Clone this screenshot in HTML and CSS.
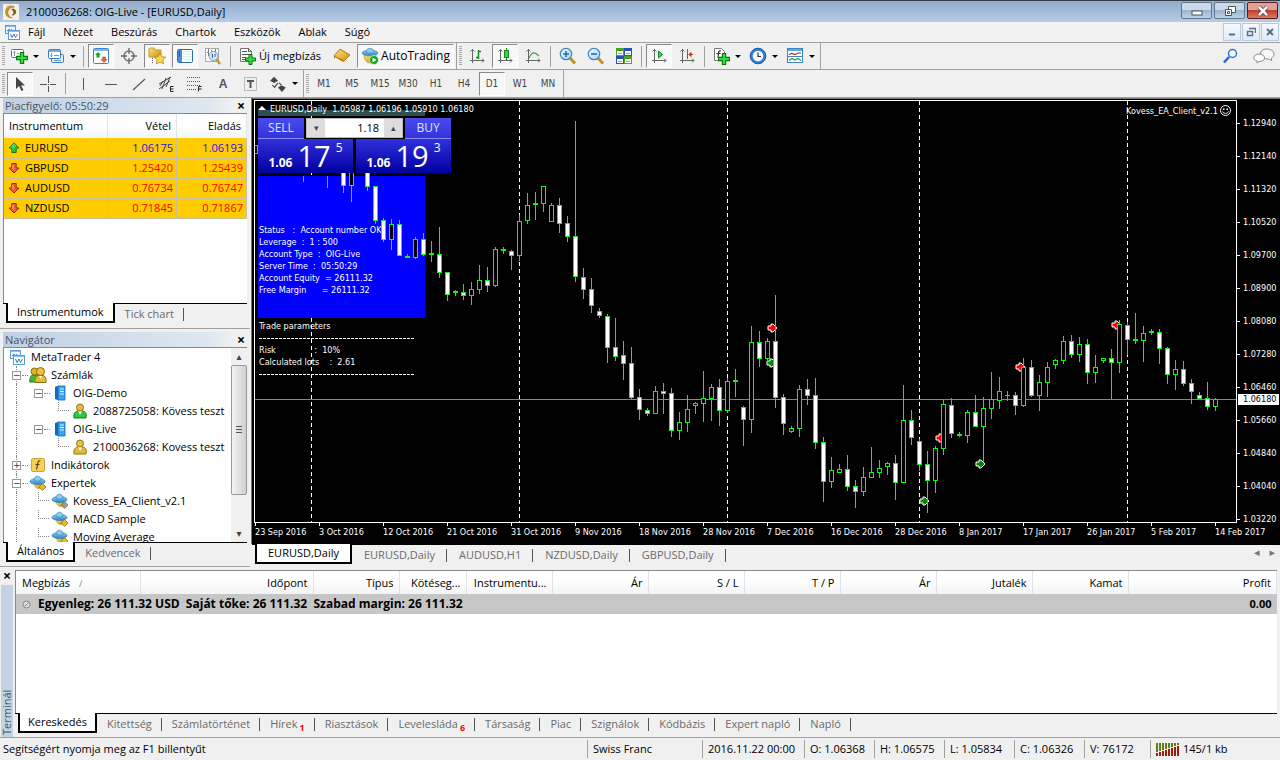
FILE: index.html
```html
<!DOCTYPE html>
<html lang="hu">
<head>
<meta charset="utf-8">
<title>2100036268: OIG-Live - [EURUSD,Daily]</title>
<link rel="stylesheet" href="styles.css">
</head>
<body>
<svg class="defs" aria-hidden="true">
  <defs>
    <linearGradient id="g-hat" x1="0" y1="0" x2="0" y2="1"><stop offset="0" stop-color="#8fd0f5"/><stop offset="1" stop-color="#2b83c0"/></linearGradient>
    <linearGradient id="g-gold" x1="0" y1="0" x2="1" y2="1"><stop offset="0" stop-color="#ffe47a"/><stop offset="1" stop-color="#c98f10"/></linearGradient>
    <linearGradient id="g-green" x1="0" y1="0" x2="1" y2="1"><stop offset="0" stop-color="#8af58a"/><stop offset="1" stop-color="#0aa012"/></linearGradient>
    <linearGradient id="g-lens" x1="0" y1="0" x2="1" y2="1"><stop offset="0" stop-color="#f4fbff"/><stop offset="1" stop-color="#a9d4f5"/></linearGradient>
    <symbol id="plus" viewBox="0 0 11 11"><path d="M4 .5h3V4h3.500v3H7v3.500H4V7H.5V4H4z" fill="#2fe03a" stroke="#067a0b"/></symbol>
    <symbol id="i-app" viewBox="0 0 16 16"><rect width="16" height="16" fill="#f6f1e6"/><path d="M11 2C5 0 1 5 2.500 10c1 3 4 5 8 4-4-1-6-4-5-7 1-3 3-4 6-3z" fill="#c98a33"/><path d="M8 5c3-1 6 1 5 4-1 2-3 3-5 2 2 0 3-2 2-4z" fill="#8a5a1e"/><path d="M3 3c3-2 7-2 9 0" stroke="#e6c48c" fill="none"/></symbol>
    <symbol id="i-charts" viewBox="0 0 15 15"><rect x=".5" y=".5" width="10" height="8" fill="#eaf4ff" stroke="#5a9ad6"/><path d="M1 1.500h9" stroke="#8fc0ee"/><path d="M2 6l2-2 1 2 2-2" stroke="#4a8ad0" fill="none"/><rect x="3.500" y="5.500" width="11" height="9" fill="#fff" stroke="#5a9ad6"/><path d="M4 6.500h10" stroke="#8fc0ee"/><path d="M5.500 9l1.500 3.500 2-3.500 1.500 3.500 2-3.500" stroke="#3a78c4" fill="none"/></symbol>
    <symbol id="i-newchart" viewBox="0 0 18 18"><rect x="1.500" y="2.500" width="12" height="8" rx="1" fill="#fff" stroke="#3c7fb8"/><path d="M4.500 4v5M3.500 5.500h2M7 6.500h2M11 7.500h1" stroke="#6c98bd"/><use href="#plus" x="6" y="5" width="12" height="12"/></symbol>
    <symbol id="i-profile" viewBox="0 0 18 18"><rect x="4.500" y="7.500" width="12" height="8" rx="1" fill="#dcebf8" stroke="#3c7fb8"/><rect x="1.500" y="2.500" width="12" height="9" rx="1" fill="#fff" stroke="#3c7fb8"/><path d="M2 4h11" stroke="#74aede" stroke-width="2"/><path d="M4.500 6v4M3.500 8.500h2M7 8.500h5M7 13.500h7" stroke="#6c98bd"/></symbol>
    <symbol id="i-watch" viewBox="0 0 18 18"><rect x="1.500" y="1.500" width="15" height="15" rx="1" fill="#fff" stroke="#3c84c8"/><path d="M2 3h14" stroke="#7db6e8" stroke-width="2"/><path d="M6 5l3 3H7.500v2.500h-3V8H3z" fill="#1f9e2d"/><path d="M12 15.500l-3-3h1.500V10h3v2.500H15z" fill="#f0602e" stroke="#c23a0c" stroke-width=".5"/></symbol>
    <symbol id="i-target" viewBox="0 0 16 16"><circle cx="8" cy="8" r="5" fill="none" stroke="#777" stroke-width="1.500"/><path d="M8 0v6M8 10v6M0 8h6M10 8h6" stroke="#666" stroke-width="1.300"/></symbol>
    <symbol id="i-star" viewBox="0 0 18 18"><path d="M1 10V2l1-1h4l1 2h6v7z" fill="url(#g-gold)" stroke="#c79d22"/><path d="M4.500 11v6" stroke="#555" stroke-dasharray="1 1"/><path d="M12 6l1.800 3.700 4 .5-3 2.700.8 4L12 15l-3.600 2 .8-4-3-2.800 4-.5z" fill="#ffd94d" stroke="#b88711" stroke-width=".8"/></symbol>
    <symbol id="i-nav" viewBox="0 0 18 16"><rect x="1.500" y="1.500" width="15" height="13" rx="1" fill="#fff" stroke="#2a6cae"/><rect x="2" y="2" width="4" height="12" fill="#4b93d6"/><path d="M7 3.500h9M7 6h9M7 8.500h9M7 11h9" stroke="#dce8f4"/><path d="M3 4h1M3 6h1M3 8h1" stroke="#123"/></symbol>
    <symbol id="i-tester" viewBox="0 0 18 18"><rect x="1.500" y="1.500" width="13" height="13" fill="#fff" stroke="#aaa"/><path d="M4.500 2v7M7.500 3v7M11.500 2v6M3 5.500h2M10 4.500h2" stroke="#777"/><path d="M12 12l4 5" stroke="#c9952a" stroke-width="2.500"/><circle cx="9.500" cy="9" r="4.500" fill="#cfe8fb" fill-opacity=".85" stroke="#6aa3cf"/><path d="M8.500 7v4M11 7v3" stroke="#557"/></symbol>
    <symbol id="i-order" viewBox="0 0 18 18"><path d="M1.500 1.500h8l3 3v10h-11z" fill="#fff" stroke="#777"/><path d="M9.500 1.500v3h3M3 4.500h5M3 7.500h8M3 10.500h4M3 12.500h3" stroke="#555" fill="none"/><use href="#plus" x="6" y="7" width="11" height="11"/></symbol>
    <symbol id="i-book" viewBox="0 0 18 18"><path d="M1 9l6-7 10 6-6 8L1 11z" fill="#b97c12"/><path d="M2 10l8 5 6-7v2l-6 7-8-5z" fill="#fff3cf"/><path d="M1 9l6-7 10 6-6 6z" fill="url(#g-gold)" stroke="#a5700d" stroke-width=".8"/></symbol>
    <symbol id="i-auto" viewBox="0 0 18 18"><path d="M3 7c0 6 3 9 6 9s6-4 6-9z" fill="url(#g-gold)" stroke="#b98a1a" stroke-width=".7"/><ellipse cx="9" cy="6" rx="8" ry="2.800" fill="url(#g-hat)" stroke="#3b86b5" stroke-width=".7"/><path d="M5 5c0-5 8-5 8 0-2 1.500-6 1.500-8 0z" fill="#8ccbef" stroke="#3b86b5" stroke-width=".7"/><circle cx="13" cy="13" r="4.500" fill="#15a51d" stroke="#fff" stroke-width=".6"/><path d="M11.500 10.500l4 2.500-4 2.500z" fill="#fff"/></symbol>
    <symbol id="axes" viewBox="0 0 16 16"><path d="M3.500 1v14M1 12.500h14M1.500 3.500l2-2 2 2M13 10.500l2 2-2 2" stroke="#666" fill="none"/></symbol>
    <symbol id="i-bars" viewBox="0 0 16 16"><use href="#axes"/><path d="M9.500 2v9M9.500 3.500H12M7 9.500h2.500" stroke="#128a1c" stroke-width="1.500"/></symbol>
    <symbol id="i-candle" viewBox="0 0 16 16"><use href="#axes"/><path d="M9.500 0v12" stroke="#128a1c"/><rect x="7.500" y="2.500" width="4" height="7" fill="#3bd54a" stroke="#128a1c"/></symbol>
    <symbol id="i-line" viewBox="0 0 16 16"><use href="#axes"/><path d="M4 10c3-6 5-7 10-2" stroke="#3aa04a" fill="none" stroke-width="1.200"/></symbol>
    <symbol id="i-zin" viewBox="0 0 18 18"><path d="M11 11l5 5.500" stroke="#c48f1c" stroke-width="3"/><circle cx="7" cy="7" r="5.700" fill="url(#g-lens)" stroke="#3d86c6" stroke-width="1.200"/><path d="M4 7h6M7 4v6" stroke="#2470b0" stroke-width="1.600"/></symbol>
    <symbol id="i-zout" viewBox="0 0 18 18"><path d="M11 11l5 5.500" stroke="#c48f1c" stroke-width="3"/><circle cx="7" cy="7" r="5.700" fill="url(#g-lens)" stroke="#3d86c6" stroke-width="1.200"/><path d="M4 7h6" stroke="#2470b0" stroke-width="1.600"/></symbol>
    <symbol id="i-tile" viewBox="0 0 16 16"><rect width="8" height="8" fill="#46a51c"/><rect x="8" width="8" height="8" fill="#2a4fc4"/><rect y="8" width="8" height="8" fill="#2a4fc4"/><rect x="8" y="8" width="8" height="8" fill="#46a51c"/><path d="M1 3h6v4H1zM9 3h6v4H9zM1 11h6v4H1zM9 11h6v4H9z" fill="#fff"/><path d="M2 5.500h4M10 5.500h4M2 13.500h4M10 13.500h4" stroke="#99a"/></symbol>
    <symbol id="i-scroll" viewBox="0 0 16 16"><use href="#axes"/><path d="M7.500 3v7l4-3.500z" fill="#3bd54a" stroke="#128a1c"/></symbol>
    <symbol id="i-shift" viewBox="0 0 16 16"><use href="#axes"/><path d="M8.500 1v10" stroke="#2c6ca8"/><path d="M14 6.500h-4M12 4.500l-2 2 2 2z" stroke="#c23a0c" fill="#c23a0c"/></symbol>
    <symbol id="i-ind" viewBox="0 0 18 18"><path d="M2.500 1.500h7l3 3v9h-10z" fill="#fff" stroke="#777"/><path d="M9 4C6.500 3 6.500 5 6 11M4.500 6.500h4" stroke="#333" fill="none" stroke-width="1.200"/><use href="#plus" x="6" y="6" width="12" height="12"/></symbol>
    <symbol id="i-clock" viewBox="0 0 18 18"><circle cx="9" cy="9" r="7.800" fill="#2f7fd6" stroke="#1c56a5"/><circle cx="9" cy="9" r="5.300" fill="#f6faff"/><path d="M9 5.500V9.500h3" stroke="#333" fill="none" stroke-width="1.200"/></symbol>
    <symbol id="i-tpl" viewBox="0 0 18 18"><rect x="1.500" y="1.500" width="15" height="14" fill="#fff" stroke="#3c84c8"/><path d="M2 3h14" stroke="#5fa3e0" stroke-width="2"/><path d="M2 9.500h14" stroke="#3c84c8"/><path d="M3 7.500l3-1 3 1 3-1.500h3" stroke="#a8321c" fill="none" stroke-width="1.200"/><path d="M3 13.500l3-2 3 1.500 3-1.500 3 2" stroke="#2e9a3a" fill="none" stroke-width="1.200"/></symbol>
    <symbol id="i-cursor" viewBox="0 0 12 16"><path d="M2 1v12l3-3 2.500 5 2-1L7 9.500h4z" fill="#444"/></symbol>
    <symbol id="i-cross" viewBox="0 0 16 16"><path d="M8.500 0v7M8.500 10v6M0 8.500h7M10 8.500h6" stroke="#555"/><path d="M8 8h1v1H8z" fill="#555"/></symbol>
    <symbol id="i-v" viewBox="0 0 16 16"><path d="M8.500 2v12" stroke="#555"/></symbol>
    <symbol id="i-h" viewBox="0 0 16 16"><path d="M2 8.500h12" stroke="#555"/></symbol>
    <symbol id="i-t" viewBox="0 0 16 16"><path d="M2 14L14 3" stroke="#555" stroke-width="1.200"/></symbol>
    <symbol id="i-chan" viewBox="0 0 18 18"><path d="M1 9L13 2M1 14l11-8M4 14L8 3M8 12l4-10M2 11l3-5" stroke="#444" fill="none"/><path d="M15.500 11.500h-3v5h3M12.500 14h3" stroke="#222" fill="none"/></symbol>
    <symbol id="i-fibo" viewBox="0 0 18 18"><path d="M1 2.500h14M1 6.500h14M1 10.500h14M1 14.500h9" stroke="#555" stroke-dasharray="1 1"/><path d="M15.500 11.500h-3v5M12.500 14h3" stroke="#222" fill="none"/></symbol>
    <symbol id="i-lbl" viewBox="0 0 16 16"><rect x="1.500" y="1.500" width="12" height="13" fill="none" stroke="#888" stroke-dasharray="1 1"/><path d="M4 5h7M7.500 5v7" stroke="#555" stroke-width="2"/></symbol>
    <symbol id="i-arrows" viewBox="0 0 16 16"><path d="M1 5l3.500-3.500L8 5 4.500 7zM8 11l3-2 4 2-3.500 4z" fill="#444"/><path d="M3 9l2 2 3-4M9 7l2 2" stroke="#444" fill="none"/></symbol>
    <symbol id="i-search" viewBox="0 0 16 16"><path d="M6 9l-5 5.500" stroke="#2a62d0" stroke-width="2.500"/><circle cx="9.500" cy="5.500" r="4" fill="#f2f7ff" stroke="#2f74dd" stroke-width="1.500"/></symbol>
    <symbol id="i-chat" viewBox="0 0 22 16"><path d="M13 1c5 0 8 2 8 5 0 2-1 3-2.500 4v2.500L15.500 11c-5 0-8-2-8-5s2-5 5.500-5z" fill="#f8f8f8" stroke="#8c8c8c"/><path d="M6 6c3 0 5.500 1.500 5.500 4S9 13.500 6 13.500L4 15v-2C2 12.500.8 11.500.8 10 .8 7.500 3 6 6 6z" fill="#fff" stroke="#8c8c8c"/></symbol>
    <symbol id="a-up" viewBox="0 0 12 12"><path d="M6 .8L11 6H8.200v4.500H3.800V6H1z" fill="url(#g-green)" stroke="#157a1a"/></symbol>
    <symbol id="a-down" viewBox="0 0 12 12"><path d="M6 11L1 6h2.800V1.500h4.400V6H11z" fill="#f0602e" stroke="#a82410"/><path d="M5 3v4" stroke="#ffc0a0"/></symbol>
    <symbol id="i-accts" viewBox="0 0 18 16"><path d="M.8 15c0-5 1-7 4-7h5v7z" fill="#35c23c" stroke="#157a1a"/><circle cx="5.500" cy="4.500" r="3.500" fill="#e0b22c" stroke="#8f6c0e"/><path d="M6 15.500c-.5-5 1.500-7 4-7h3c3 0 4.500 2 4 7z" fill="#e3bb3a" stroke="#8f6c0e"/><circle cx="11.500" cy="4.500" r="4" fill="#ecc23c" stroke="#8f6c0e"/><path d="M10 9l1.500 3L13 9z" fill="#fff"/></symbol>
    <symbol id="i-demo" viewBox="0 0 14 16"><path d="M1 15c-1-5 2-7 4-7h4c3 0 5 2 4 7z" fill="#2fc83a" stroke="#118219"/><path d="M5 8l2 4 2-4z" fill="#fff"/><circle cx="7" cy="4.500" r="3.500" fill="#e8b93a" stroke="#94700f"/></symbol>
    <symbol id="i-live" viewBox="0 0 14 16"><path d="M1 15c-1-5 2-7 4-7h4c3 0 5 2 4 7z" fill="#e3bb3a" stroke="#94700f"/><path d="M5 8l2 4 2-4z" fill="#fff"/><circle cx="7" cy="4.500" r="3.500" fill="#e8c04a" stroke="#94700f"/></symbol>
    <symbol id="i-server" viewBox="0 0 14 16"><path d="M2 2l4-1.500V15.500L2 14z" fill="#1668b8"/><path d="M5 1h7v14H5z" fill="#39a4ee" stroke="#1668b8" stroke-width=".8"/><path d="M7 4h4M7 6.500h4M7 9h4" stroke="#e6f6ff"/></symbol>
    <symbol id="i-fx" viewBox="0 0 16 16"><rect x="1.500" y="1.500" width="13" height="13" rx="1.500" fill="#f6d25c" stroke="#c9a43c"/><path d="M10.500 4C7.500 3 8 6 6.500 12.500M5.500 7.500h4" stroke="#5b430a" fill="none" stroke-width="1.200"/></symbol>
    <symbol id="i-ea" viewBox="0 0 18 16"><path d="M4 7c1 5 3 7 6 7 3-1 4-4 4-7z" fill="url(#g-gold)"/><ellipse cx="8.500" cy="6.500" rx="7.500" ry="3" fill="url(#g-hat)" stroke="#2d79ab" stroke-width=".7"/><path d="M5 5c0-5 7-5 7 0-2 1.500-5 1.500-7 0z" fill="#8dcdf2" stroke="#3583b4" stroke-width=".7"/><path d="M13.500 8.500l3.500 3.500-3.500 3.500L10 12z" fill="currentColor" stroke="#7e661d" stroke-width=".7"/></symbol>
  </defs>
</svg>

<header class="titlebar">
  <svg class="app-icon"><use href="#i-app"/></svg>
  <h1 class="title">2100036268: OIG-Live - [EURUSD,Daily]</h1>
  <div class="win-buttons">
    <button class="win" aria-label="Kis méret"><svg width="12" height="12"><rect x="1" y="6" width="10" height="4" fill="#fff" stroke="#455"/></svg></button>
    <button class="win" aria-label="Visszaállítás"><svg width="12" height="12"><path d="M4.500 1.500h7v6h-7z" fill="#fff" stroke="#455"/><path d="M1.500 4.500h6v6h-6zM3.500 6.500h2v2h-2z" fill="#fff" stroke="#455"/></svg></button>
    <button class="win win-close" aria-label="Bezárás"><svg width="12" height="12"><path d="M2 2l8 8M10 2l-8 8" stroke="#533" stroke-width="4"/><path d="M2 2l8 8M10 2l-8 8" stroke="#fff" stroke-width="2.500"/></svg></button>
  </div>
</header>

<nav class="menubar">
  <svg class="menu-icon"><use href="#i-charts"/></svg>
  <button class="menu">Fájl</button><button class="menu">Nézet</button><button class="menu">Beszúrás</button><button class="menu">Chartok</button><button class="menu">Eszközök</button><button class="menu">Ablak</button><button class="menu">Súgó</button>
  <div class="mdi-buttons">
    <button class="mdi" aria-label="Kis méret"><svg width="10" height="10"><path d="M2 7.500h6" stroke="#5b7086" stroke-width="2"/></svg></button>
    <button class="mdi" aria-label="Visszaállítás"><svg width="10" height="10"><path d="M3 1.500h6.500V6M1.500 4.500h5v4h-5z" fill="none" stroke="#5b7086" stroke-width="1.500"/></svg></button>
    <button class="mdi" aria-label="Bezárás"><svg width="10" height="10"><path d="M2 2l6 6M8 2L2 8" stroke="#5b7086" stroke-width="2"/></svg></button>
  </div>
</nav>

<div class="toolbar-row">
  <div class="toolbar">
    <i class="grip"></i>
    <button class="tool drop" aria-label="Új chart"><svg class="ic"><use href="#i-newchart"/></svg></button>
    <button class="tool drop" aria-label="Profilok"><svg class="ic"><use href="#i-profile"/></svg></button>
    <i class="sep"></i>
    <button class="tool on" aria-label="Piacfigyelő"><svg class="ic"><use href="#i-watch"/></svg></button>
    <button class="tool" aria-label="Adatablak"><svg class="ic small"><use href="#i-target"/></svg></button>
    <button class="tool on" aria-label="Navigátor"><svg class="ic"><use href="#i-star"/></svg></button>
    <button class="tool on" aria-label="Terminál"><svg class="ic"><use href="#i-nav"/></svg></button>
    <button class="tool" aria-label="Teszter"><svg class="ic"><use href="#i-tester"/></svg></button>
    <i class="sep"></i>
    <button class="tool text order"><svg class="ic"><use href="#i-order"/></svg>Új megbízás</button>
    <button class="tool" aria-label="MetaEditor"><svg class="ic"><use href="#i-book"/></svg></button>
    <button class="tool text on auto"><svg class="ic"><use href="#i-auto"/></svg>AutoTrading</button>
  </div>
  <div class="toolbar">
    <i class="grip"></i>
    <button class="tool" aria-label="Oszlopok"><svg class="ic small"><use href="#i-bars"/></svg></button>
    <button class="tool on" aria-label="Gyertyák"><svg class="ic small"><use href="#i-candle"/></svg></button>
    <button class="tool" aria-label="Vonal"><svg class="ic small"><use href="#i-line"/></svg></button>
    <i class="sep"></i>
    <button class="tool" aria-label="Nagyítás"><svg class="ic"><use href="#i-zin"/></svg></button>
    <button class="tool" aria-label="Kicsinyítés"><svg class="ic"><use href="#i-zout"/></svg></button>
    <button class="tool" aria-label="Mozaik"><svg class="ic small"><use href="#i-tile"/></svg></button>
    <i class="sep"></i>
    <button class="tool on" aria-label="Görgetés"><svg class="ic small"><use href="#i-scroll"/></svg></button>
    <button class="tool" aria-label="Eltolás"><svg class="ic small"><use href="#i-shift"/></svg></button>
    <i class="sep"></i>
    <button class="tool drop" aria-label="Indikátorok"><svg class="ic"><use href="#i-ind"/></svg></button>
    <button class="tool drop" aria-label="Periódusok"><svg class="ic"><use href="#i-clock"/></svg></button>
    <button class="tool drop" aria-label="Sablonok"><svg class="ic"><use href="#i-tpl"/></svg></button>
  </div>
  <div class="toolbar-end">
    <button class="tool" aria-label="Keresés"><svg class="ic small"><use href="#i-search"/></svg></button>
    <button class="tool" aria-label="Csevegés"><svg class="ic wide"><use href="#i-chat"/></svg></button>
  </div>
</div>

<div class="toolbar-row">
  <div class="toolbar">
    <i class="grip"></i>
    <button class="tool on" aria-label="Kurzor"><svg class="ic small"><use href="#i-cursor"/></svg></button>
    <button class="tool" aria-label="Célkereszt"><svg class="ic small"><use href="#i-cross"/></svg></button>
    <i class="sep"></i>
    <button class="tool" aria-label="Függőleges vonal"><svg class="ic small"><use href="#i-v"/></svg></button>
    <button class="tool" aria-label="Vízszintes vonal"><svg class="ic small"><use href="#i-h"/></svg></button>
    <button class="tool" aria-label="Trendvonal"><svg class="ic small"><use href="#i-t"/></svg></button>
    <button class="tool" aria-label="Csatorna"><svg class="ic"><use href="#i-chan"/></svg></button>
    <button class="tool" aria-label="Fibonacci"><svg class="ic"><use href="#i-fibo"/></svg></button>
    <button class="tool letter">A</button>
    <button class="tool" aria-label="Címke"><svg class="ic small"><use href="#i-lbl"/></svg></button>
    <button class="tool drop" aria-label="Nyilak"><svg class="ic"><use href="#i-arrows"/></svg></button>
  </div>
  <div class="toolbar">
    <i class="grip"></i>
    <button class="tool tf">M1</button><button class="tool tf">M5</button><button class="tool tf">M15</button><button class="tool tf">M30</button><button class="tool tf">H1</button><button class="tool tf">H4</button><button class="tool tf on">D1</button><button class="tool tf">W1</button><button class="tool tf">MN</button>
  </div>
</div>

<main class="workspace">
  <aside class="side">
    <section class="panel">
      <header class="caption"><h2>Piacfigyelő: 05:50:29</h2><button class="x" aria-label="Bezárás">×</button></header>
      <div class="panel-body">
        <table class="quotes">
          <colgroup><col><col class="q-bid"><col class="q-ask"></colgroup>
          <thead><tr><th>Instrumentum</th><th>Vétel</th><th>Eladás</th></tr></thead>
          <tbody>
            <tr class="up"><td><svg><use href="#a-up"/></svg>EURUSD</td><td>1.06175</td><td>1.06193</td></tr>
            <tr><td><svg><use href="#a-down"/></svg>GBPUSD</td><td>1.25420</td><td>1.25439</td></tr>
            <tr><td><svg><use href="#a-down"/></svg>AUDUSD</td><td>0.76734</td><td>0.76747</td></tr>
            <tr><td><svg><use href="#a-down"/></svg>NZDUSD</td><td>0.71845</td><td>0.71867</td></tr>
          </tbody>
        </table>
      </div>
      <div class="tabs"><button class="tab active">Instrumentumok</button><button class="tab">Tick chart</button></div>
    </section>
    <section class="panel navigator">
      <header class="caption"><h2>Navigátor</h2><button class="x" aria-label="Bezárás">×</button></header>
      <div class="panel-body tree-wrap">
        <ul class="tree">
          <li><svg class="root"><use href="#i-charts"/></svg>MetaTrader 4</li>
          <li class="l1"><button class="exp" aria-label="Összecsukás">−</button><i class="dots"></i><svg><use href="#i-accts"/></svg>Számlák</li>
          <li class="l2"><button class="exp" aria-label="Összecsukás">−</button><i class="dots"></i><svg><use href="#i-server"/></svg>OIG-Demo</li>
          <li class="l3"><i class="elbow"></i><svg><use href="#i-demo"/></svg>2088725058: Kövess teszt</li>
          <li class="l2"><button class="exp" aria-label="Összecsukás">−</button><i class="dots"></i><svg><use href="#i-server"/></svg>OIG-Live</li>
          <li class="l3"><i class="elbow"></i><svg><use href="#i-live"/></svg>2100036268: Kovess teszt</li>
          <li class="l1"><button class="exp" aria-label="Kibontás">+</button><i class="dots"></i><svg><use href="#i-fx"/></svg>Indikátorok</li>
          <li class="l1"><button class="exp" aria-label="Összecsukás">−</button><i class="dots"></i><svg><use href="#i-ea"/></svg>Expertek</li>
          <li class="l2 ea"><i class="elbow"></i><svg class="idle"><use href="#i-ea"/></svg>Kovess_EA_Client_v2.1</li>
          <li class="l2 ea"><i class="elbow"></i><svg><use href="#i-ea"/></svg>MACD Sample</li>
          <li class="l2 ea"><i class="elbow"></i><svg><use href="#i-ea"/></svg>Moving Average</li>
        </ul>
        <div class="scroll"><button aria-label="Fel">▴</button><i class="thumb"></i><button aria-label="Le">▾</button></div>
      </div>
      <div class="tabs"><button class="tab active">Általános</button><button class="tab">Kedvencek</button></div>
    </section>
  </aside>

  <section class="chart-area">
    <div class="chart">
      <div class="plot">
        <svg class="candles" id="candles" role="img" aria-label="EURUSD napi gyertyák">
          <g id="scene" transform="translate(-255 -101)">
            <path class="period" d="M311.500 101V1500M519.500 101V1500M727.500 101V1500M919.500 101V1500M1127.500 101V1500"/>
            <rect x="258" y="110" width="167" height="6" fill="#2f4f4f"/>
            <rect x="258" y="176" width="167" height="142" fill="#0000ff"/>
            <path d="M262 106l4 4h-8z" fill="#fff"/>
            <text x="270" y="112">EURUSD,Daily  1.05987 1.06196 1.05910 1.06180</text>
            <text x="259" y="233">Status   :  Account number OK</text>
            <text x="259" y="245">Leverage  :  1 : 500</text>
            <text x="259" y="257">Account Type  :  OIG-Live</text>
            <text x="259" y="269">Server Time  :  05:50:29</text>
            <text x="259" y="281">Account Equity  = 26111.32</text>
            <text x="259" y="293">Free Margin      = 26111.32</text>
            <text x="259" y="329">Trade parameters</text>
            <path d="M259 338.500h156M259 374.500h156" stroke="#fff" stroke-dasharray="3 1"/>
            <text x="259" y="353">Risk               :  10%</text>
            <text x="259" y="365">Calculated lots    :  2.61</text>
            <path d="M255 399.500h2000" stroke="#778899"/>
          </g>
        </svg>
        <div class="ea-name">Kovess_EA_Client_v2.1<svg width="13" height="13"><circle cx="6.500" cy="6.500" r="5" fill="none" stroke="#fff"/><path d="M4 4.500h1.500v1.500H4zM7.500 4.500H9v1.500H7.500z" fill="#fff"/><path d="M3.500 7.500c1 2.500 5 2.500 6 0" fill="none" stroke="#fff"/></svg></div>
        <form class="trade" onsubmit="return false">
          <button class="side-btn" type="button">SELL</button>
          <div class="lots"><button type="button" aria-label="Kevesebb">▾</button><input aria-label="Mennyiség" value="1.18"><button type="button" aria-label="Több">▴</button></div>
          <button class="side-btn" type="button">BUY</button>
          <div class="quote"><b>1.06</b><strong>17</strong><sup>5</sup></div>
          <div class="quote"><b>1.06</b><strong>19</strong><sup>3</sup></div>
        </form>
      </div>
      <div class="prices">
        <span>1.12940</span><span>1.12140</span><span>1.11320</span><span>1.10520</span><span>1.09700</span><span>1.08900</span><span>1.08080</span><span>1.07280</span><span>1.06460</span><span>1.05660</span><span>1.04840</span><span>1.04040</span><span>1.03220</span>
        <b class="current">1.06180</b>
      </div>
      <div class="dates">
        <span>23 Sep 2016</span><span>3 Oct 2016</span><span>12 Oct 2016</span><span>21 Oct 2016</span><span>31 Oct 2016</span><span>9 Nov 2016</span><span>18 Nov 2016</span><span>28 Nov 2016</span><span>7 Dec 2016</span><span>16 Dec 2016</span><span>28 Dec 2016</span><span>8 Jan 2017</span><span>17 Jan 2017</span><span>26 Jan 2017</span><span>5 Feb 2017</span><span>14 Feb 2017</span>
      </div>
    </div>
    <div class="tabs chart-tabs">
      <button class="tab active">EURUSD,Daily</button><button class="tab">EURUSD,Daily</button><button class="tab">AUDUSD,H1</button><button class="tab">NZDUSD,Daily</button><button class="tab">GBPUSD,Daily</button>
      <div class="tab-scroll"><button aria-label="Előző">◂</button><button aria-label="Következő">▸</button></div>
    </div>
  </section>
</main>

<section class="terminal">
  <header class="strip"><button class="x" aria-label="Bezárás">×</button><h2>Terminál</h2></header>
  <div class="term-main">
    <div class="term-body">
      <table class="orders">
        <colgroup><col class="c-id"><col class="c-time"><col class="c-type"><col class="c-lot"><col class="c-sym"><col class="c-num"><col class="c-num"><col class="c-num"><col class="c-num"><col class="c-num"><col class="c-num"><col></colgroup>
        <thead><tr><th>Megbízás <i>∕</i></th><th>Időpont</th><th>Típus</th><th>Kötéseg...</th><th>Instrumentu...</th><th>Ár</th><th>S / L</th><th>T / P</th><th>Ár</th><th>Jutalék</th><th>Kamat</th><th>Profit</th></tr></thead>
        <tbody><tr><td colspan="11"><svg width="9" height="9"><circle cx="4.500" cy="4.500" r="3.500" fill="#ddd" stroke="#888"/><path d="M2.500 6.500l4-4" stroke="#888"/></svg>Egyenleg: 26 111.32 USD&nbsp; Saját tőke: 26 111.32&nbsp; Szabad margin: 26 111.32</td><td>0.00</td></tr></tbody>
      </table>
    </div>
    <div class="tabs term-tabs">
      <button class="tab active">Kereskedés</button><button class="tab">Kitettség</button><button class="tab">Számlatörténet</button><button class="tab">Hírek<sub>1</sub></button><button class="tab">Riasztások</button><button class="tab">Levelesláda<sub>6</sub></button><button class="tab">Társaság</button><button class="tab">Piac</button><button class="tab">Szignálok</button><button class="tab">Kódbázis</button><button class="tab">Expert napló</button><button class="tab">Napló</button>
    </div>
  </div>
</section>

<footer class="status">
  <span class="help">Segítségért nyomja meg az F1 billentyűt</span>
  <span class="s-profile">Swiss Franc</span><span class="s-time">2016.11.22 00:00</span><span class="s-val">O: 1.06368</span><span class="s-val">H: 1.06575</span><span class="s-val">L: 1.05834</span><span class="s-val">C: 1.06326</span><span class="s-vol">V: 76172</span>
  <span class="s-net"><svg id="signal" width="24" height="14"></svg>145/1 kb</span>
</footer>
<script src="chart.js"></script>
</body>
</html>
```

FILE: styles.css
```css
* { box-sizing: border-box; }
body {
  margin: 0; height: 100vh; min-height: 640px; display: flex; flex-direction: column;
  background: #f0f0f0; color: #000;
  font: 11px/16px "Open Sans", "Noto Sans", sans-serif;
}
button, input { font: inherit; color: inherit; margin: 0; padding: 0; border: 0; background: none; }
h1, h2 { margin: 0; font-size: inherit; font-weight: normal; }
i { font-style: normal; }
.defs { position: absolute; width: 0; height: 0; }

.titlebar {
  height: 22px; display: flex; align-items: center; flex: none;
  border-top: 1px solid #333b45; padding-left: 3px;
  background: linear-gradient(#92abca, #b4cce6);
}
.app-icon { width: 16px; height: 16px; }
.title { flex: 1; padding-left: 7px; }
.win-buttons { display: flex; gap: 2px; align-self: flex-start; padding: 1px 2px; }
.win {
  width: 31px; height: 17px; display: flex; align-items: center; justify-content: center;
  border: 1px solid #5f7890; border-radius: 2px;
  background: linear-gradient(#c9d9ea 45%, #9cb4cd 50%, #bdd2e8);
}
.win-close { border-color: #5b1d1d; background: linear-gradient(#e0a296 45%, #c1412c 50%, #d77b62); }

.menubar { height: 21px; display: flex; align-items: center; flex: none; padding-left: 5px; border-bottom: 1px solid #a0a0a0; background: #f2f2f2; }
.menu-icon { width: 15px; height: 15px; margin-right: -1px; }
.menu { padding: 0 9px; }
.mdi-buttons { margin-left: auto; display: flex; gap: 1px; padding-right: 1px; }
.mdi { width: 18px; height: 18px; display: flex; align-items: center; justify-content: center; border: 1px solid #b6c9db; background: linear-gradient(#f4f9fe, #dfebf7); }

.toolbar-row { height: 27px; display: flex; flex: none; border-bottom: 1px solid #a0a0a0; }
.toolbar-row:nth-of-type(2) { height: 28px; }
.toolbar { display: flex; align-items: center; padding: 0 1px 0 2px; border-right: 1px solid #a0a0a0; }
.grip { width: 3px; height: 20px; margin-right: 1px; background: repeating-linear-gradient(#a8a8a8 0 1px, #f0f0f0 1px 2px); }
.sep { width: 1px; height: 21px; margin: 0 3px; background: #a0a0a0; }
.tool { width: 26px; height: 24px; margin: 0 1px; display: flex; align-items: center; justify-content: center; border: 1px solid transparent; }
.on { background: #f8f8f8; border-color: #8a8a8a #fff #fff #8a8a8a; }
.drop { width: 35px; justify-content: flex-start; padding-left: 2px; gap: 5px; }
.drop::after { content: ""; border: 3px solid transparent; border-top: 3px solid #000; border-bottom: 0; }
.ic { width: 18px; height: 18px; flex: none; }
.ic.small { width: 16px; height: 16px; }
.ic.wide { width: 22px; }
.text { gap: 2px; }
.order { width: 92px; padding-left: 3px; justify-content: flex-start; }
.auto { width: 97px; font-size: 12px; }
.letter { font: bold 12px "Liberation Sans", sans-serif; color: #555; }
.tf { font: 10px "DejaVu Sans Condensed", "DejaVu Sans", sans-serif; color: #444; }
.toolbar-end { margin-left: auto; display: flex; align-items: center; gap: 5px; padding-right: 2px; }

.workspace { flex: 1; min-height: 0; display: flex; }
.side { width: 250px; flex: none; display: flex; flex-direction: column; gap: 3px; }
.panel { display: flex; flex-direction: column; flex: 230; min-height: 0; padding: 0 3px 5px; border-bottom: 1px solid #a0a0a0; }
.navigator { flex: 235; padding-bottom: 4px; }
.caption { height: 15px; display: flex; align-items: center; justify-content: space-between; flex: none; color: #43546a; background: linear-gradient(90deg, #bfd0e2, #dfe8f1 85%, #f0f0f0 95%); }
.caption h2 { padding-left: 2px; }
.x { width: 12px; height: 12px; font: bold 14px/12px "Open Sans", sans-serif; color: #000; }
.panel-body { flex: 1; min-height: 0; overflow: hidden; background: #fff; border: solid #888; border-width: 1px 0 0 1px; }
.quotes { width: 100%; border-collapse: collapse; table-layout: fixed; }
.q-bid { width: 69px; }
.q-ask { width: 70px; }
.quotes th { height: 24px; font-weight: normal; text-align: right; padding: 0 5px; border-right: 1px solid #e2e4e8; background: linear-gradient(#fff 50%, #f3f5f8); }
.quotes th:first-child, .quotes td:first-child { text-align: left; }
.quotes td { height: 20px; padding: 0 3px; text-align: right; color: #f00; background: #fc0; border-right: 1px solid #c8c0a0; border-bottom: 1px solid #c8c0a0; }
.quotes td:first-child { color: #000; }
.quotes .up td { color: #2414e6; }
.quotes .up td:first-child { color: #000; }
.quotes svg { width: 12px; height: 12px; margin: 0 5px 0 1px; vertical-align: -2px; }

.tabs { height: 20px; display: flex; align-items: flex-start; flex: none; border-top: 1px solid #000; padding-left: 3px; color: #6b6b6b; }
.tab { height: 19px; padding: 0 10px; position: relative; white-space: nowrap; }
.tab::after { content: ""; position: absolute; right: 0; top: 4px; height: 13px; border-right: 1px solid #555; }
.tab.active { height: 20px; margin-top: -1px; padding: 0 9px; color: #000; background: #fff; border: solid #000; border-width: 0 2px 2px; }
.tab.active::after { display: none; }

.tree-wrap { display: flex; }
.tree { flex: 1; margin: 0; padding: 0 0 0 6px; list-style: none; min-width: 0; overflow: hidden; }
.tree li { height: 18px; display: flex; align-items: center; white-space: nowrap; gap: 4px; position: relative; }
.tree svg { width: 18px; height: 16px; flex: none; color: #eab82c; }
.tree .root { width: 15px; height: 15px; margin-right: 2px; }
.tree .idle { color: #999; }
.tree .l1 { padding-left: 2px; }
.tree .l2 { padding-left: 24px; }
.tree .l3 { padding-left: 48px; }
.tree .l1::before, .tree .l2::before, .tree .l3::before { content: ""; position: absolute; left: 6px; top: 0; height: 18px; border-left: 1px dotted #888; }
.tree .ea { padding-left: 28px; }
.exp { position: relative; width: 9px; height: 9px; font: 9px/7px "DejaVu Sans", sans-serif; color: #236; border: 1px solid #999; background: #fff; }
.dots { width: 6px; margin: 0 -3px; border-top: 1px dotted #888; }
.elbow { width: 11px; height: 9px; margin: -9px -2px 0 0; border: dotted #888; border-width: 0 0 1px 1px; }
.scroll { width: 16px; display: flex; flex-direction: column; background: #f0f0f0; }
.scroll button { height: 17px; font: 10px/17px "DejaVu Sans", sans-serif; color: #444; }
.thumb { height: 130px; border: 1px solid #999; border-radius: 2px; background: repeating-linear-gradient(#555 0 1px, transparent 1px 3px) center / 6px 8px no-repeat, linear-gradient(90deg, #f4f4f4, #cfcfcf); }
.scroll button:last-child { margin-top: auto; }

.chart-area { flex: 1; min-width: 0; display: flex; flex-direction: column; }
.chart {
  flex: 1; min-height: 0; display: grid; grid-template: minmax(0, 1fr) 21px / minmax(0, 1fr) 43px;
  padding: 1px 0 0 2px; margin-left: 1px; background: #000; color: #fff;
  border: solid #777; border-width: 1px 0 0 1px;
  font: 9px/12px "DejaVu Sans Condensed", "DejaVu Sans", sans-serif;
}
.plot { position: relative; overflow: hidden; border: 1px solid #fff; }
.candles { display: block; width: 100%; height: 100%; }
.candles text { fill: #fff; white-space: pre; }
.period { stroke: #fff; stroke-dasharray: 4 3; }
.wick { stroke: #0f0; }
.up-bar { fill: #000; stroke: #0f0; }
.down-bar { fill: #fff; stroke: #0f0; }
.ea-name { position: absolute; right: 4px; top: 3px; display: flex; align-items: center; gap: 1px; }
.trade { position: absolute; left: 3px; top: 17px; width: 193px; display: grid; grid-template-columns: 46px 97px 46px; gap: 0 2px; font-family: "Open Sans", sans-serif; background: #000; }
.side-btn { height: 21px; font-size: 12px; color: #dfe3ff; background: linear-gradient(#4a4af0, #3333dc); border-bottom: 1px solid #8a8af0; }
.lots { height: 20px; display: flex; background: #fff; border: 1px solid #bbb; }
.lots button { width: 18px; color: #446; background: #ddd; }
.lots input { flex: 1; width: 0; text-align: right; padding-right: 5px; color: #000; font-size: 11px; }
.quote { height: 34px; display: flex; align-items: flex-end; justify-content: center; gap: 5px; background: linear-gradient(#3030dc, #0000a0); }
.quote b { font-size: 12px; line-height: 20px; }
.quote strong { font-weight: normal; font-size: 29px; line-height: 34px; }
.quote sup { align-self: flex-start; font-size: 12px; line-height: 18px; }
.trade .quote:nth-of-type(2) { grid-row: 2; grid-column: 1 / -1; width: 95px; }
.trade .quote:nth-of-type(3) { grid-row: 2; grid-column: 1 / -1; width: 95px; justify-self: end; }
.prices { position: relative; min-height: 0; display: flex; flex-direction: column; padding-top: 7px; }
.prices span { height: 33px; flex: none; line-height: 33px; display: flex; align-items: center; gap: 3px; }
.prices span::before { content: ""; width: 3px; border-top: 1px solid #fff; }
.current { position: absolute; left: 1px; right: 1px; top: 294px; height: 11px; padding-left: 5px; line-height: 11px; font-weight: normal; color: #000; background: #fff; }
.dates { grid-column: 1 / -1; display: flex; padding-left: 1px; overflow: hidden; }
.dates span { width: 64px; flex: none; white-space: nowrap; line-height: 13px; }
.dates span::before { content: ""; display: block; height: 3px; border-left: 1px solid #fff; }
.chart-tabs { height: 23px; margin-left: 2px; }
.chart-tabs .tab { padding: 0 12px; }
.chart-tabs .active { padding: 0 11px; }
.tab-scroll { margin-left: auto; display: flex; gap: 10px; padding-right: 5px; color: #777; font-family: "DejaVu Sans", sans-serif; }

.terminal { height: 171px; flex: none; display: flex; border-bottom: 1px solid #a0a0a0; padding-top: 3px; }
.strip { width: 14px; display: flex; flex-direction: column; align-items: center; }
.strip h2 { flex: 1; width: 12px; margin-top: 3px; writing-mode: vertical-rl; transform: rotate(180deg); line-height: 12px; color: #43546a; background: #c3d3e3; padding-top: 2px; }
.term-main { flex: 1; min-width: 0; display: flex; flex-direction: column; padding: 0 3px 4px 1px; }
.term-body { flex: 1; min-height: 0; background: #fff; border: solid #888; border-width: 1px 0 0 1px; }
.orders { width: 100%; table-layout: fixed; border-collapse: collapse; }
.c-id { width: 124px; } .c-time { width: 173px; } .c-type { width: 86px; } .c-lot { width: 67px; } .c-sym { width: 86px; } .c-num { width: 96px; }
.orders th { height: 23px; padding: 0 5px; text-align: right; font-weight: normal; white-space: nowrap; border-right: 1px solid #e0e3e8; background: linear-gradient(#fff 40%, #f1f3f6); }
.orders th:first-child { text-align: left; padding-left: 6px; }
.orders th i { padding-left: 6px; color: #777; font-size: 9px; line-height: 9px; }
.orders td { height: 20px; padding: 0 5px 0 6px; font-weight: bold; font-size: 12px; background: #c6c6c6; }
.orders td:last-child { text-align: right; font-size: 11px; }
.orders svg { margin-right: 7px; vertical-align: -1px; }
.term-tabs .active { padding: 0 8px; }
.term-tabs sub { font: bold 9px/9px "Open Sans", sans-serif; color: #f00; vertical-align: -3px; margin-left: 2px; }

.status { height: 22px; flex: none; display: flex; align-items: center; padding-left: 3px; white-space: nowrap; }
.status span { height: 18px; line-height: 18px; padding-left: 5px; border-left: 1px solid #a0a0a0; }
.status .help { flex: 1; border: 0; padding: 0; }
.s-profile { width: 115px; } .s-time { width: 102px; } .s-val { width: 70px; } .s-vol { width: 66px; }
.s-net { width: 130px; display: flex; align-items: center; gap: 3px; }
```

FILE: chart.js
```js
const NS = 'http://www.w3.org/2000/svg';
const scene = document.getElementById('scene');

function add(parent, name, attrs) {
  const el = document.createElementNS(NS, name);
  for (const k in attrs) el.setAttribute(k, attrs[k]);
  parent.appendChild(el);
}

// [x, high, body top, body bottom, low, falling]
const bars = [
  [255,145,145,154,154,0],[303,176,176,176,182,0],[327,176,176,176,188,0],[343,176,170,186,193,1],[351,176,170,186,202,0],[367,176,170,187,191,1],
  [375,186,186,221,224,1],[383,218,220,240,242,1],[391,219,224,240,250,0],[399,220,224,256,256,1],[407,254,256,258,258,0],
  [415,237,239,258,259,0],[423,233,239,255,256,1],[431,241,253,255,262,0],[439,227,254,273,278,1],[447,272,272,295,301,1],
  [455,290,291,293,296,0],[463,284,292,296,300,1],[471,282,289,296,305,0],[479,265,280,290,294,0],[487,267,280,286,292,1],
  [495,247,249,286,287,0],[503,247,249,251,254,0],[511,250,251,256,270,1],[519,215,221,256,261,0],[527,193,205,221,224,0],
  [535,192,203,205,220,0],[543,186,186,204,212,0],[551,203,205,222,222,0],[559,198,205,224,233,1],[567,216,223,237,242,1],
  [575,121,236,277,282,1],[583,268,277,290,299,1],[591,278,289,306,313,1],[599,308,311,316,318,1],[607,314,316,348,363,1],
  [615,318,347,357,361,1],[623,341,355,364,380,1],[631,347,363,398,399,1],[639,389,397,410,420,1],[647,408,410,414,416,1],
  [655,386,391,414,414,0],[663,383,391,394,414,1],[671,388,393,431,437,1],[679,412,422,431,440,0],[687,395,409,423,432,0],
  [695,402,403,406,414,0],[703,371,398,404,422,0],[711,384,387,399,421,0],[719,379,387,411,426,1],[727,378,381,411,413,0],
  [735,369,380,382,397,0],[743,406,407,420,446,1],[751,326,342,420,433,0],[759,331,342,359,367,1],[767,338,341,359,362,0],
  [775,295,341,398,408,1],[783,394,397,424,435,1],[791,426,428,432,433,0],[799,385,389,429,437,0],[807,379,389,396,405,1],
  [815,378,395,443,449,1],[823,437,442,482,502,1],[831,457,470,482,488,0],[839,464,469,473,473,0],[847,455,469,487,491,1],
  [855,480,486,492,508,1],[863,467,477,492,496,0],[871,447,472,478,478,0],[879,460,468,473,478,0],[887,462,463,467,475,0],
  [895,455,463,483,500,1],[903,385,420,483,483,0],[911,410,420,438,445,1],[919,439,441,465,471,1],[927,451,464,481,513,1],
  [935,446,448,481,493,0],[943,400,404,449,455,0],[951,398,405,434,438,1],[959,432,434,436,437,0],[967,410,412,436,443,0],
  [975,395,412,427,427,1],[983,397,408,427,462,0],[991,372,399,409,419,0],[999,377,391,401,409,0],[1007,391,395,396,401,0],
  [1015,392,395,406,415,1],[1023,358,367,406,407,0],[1031,360,367,396,397,1],[1039,375,382,396,411,0],[1047,362,367,383,397,0],
  [1055,359,360,365,369,0],[1063,336,341,361,364,0],[1071,335,341,355,358,1],[1079,337,344,355,362,0],[1087,339,344,373,384,1],
  [1095,355,367,373,383,0],[1103,358,358,361,363,0],[1111,349,358,363,399,1],[1119,320,324,363,373,0],[1127,322,325,340,355,1],
  [1135,313,339,341,344,0],[1143,326,333,341,362,0],[1151,329,331,333,335,0],[1159,329,332,349,364,1],[1167,347,348,375,384,1],
  [1175,360,369,375,390,0],[1183,361,369,384,386,1],[1191,379,383,392,404,1],[1199,392,395,399,399,1],[1207,382,398,407,410,1],[1215,398,399,407,411,0]
];

// Order markers sit under the candles: [x, y, colour]
const marks = [[772,328,'#f00'],[771,363,'#080'],[940,438,'#f00'],[1020,367,'#f00'],[1116,325,'#f00'],[924,501,'#080'],[980,464,'#080']];
for (const [x, y, c] of marks) {
  add(scene, 'path', { d: `M${x - 1} ${y - 4}h2l4 4-4 4h-2v-2h-3v-4h3z`, fill: c, stroke: '#fff' });
}

for (const [x, hi, top, bottom, lo, down] of bars) {
  add(scene, 'path', { class: 'wick', d: `M${x + .5} ${hi}V${lo}` });
  if (bottom > top) {
    add(scene, 'rect', {
      class: down ? 'down-bar' : 'up-bar',
      x: x - 1.5, y: top + .5, width: 4, height: Math.max(bottom - top - 1, 0.01)
    });
  }
}

const signal = document.getElementById('signal');
for (let i = 0; i < 8; i++) {
  const split = 10 - i;
  add(signal, 'rect', { x: i * 3, y: 1, width: 2, height: split - 1, fill: '#5f7d12' });
  add(signal, 'rect', { x: i * 3, y: split + 1, width: 2, height: 13 - split, fill: '#9c1c08' });
}
```
